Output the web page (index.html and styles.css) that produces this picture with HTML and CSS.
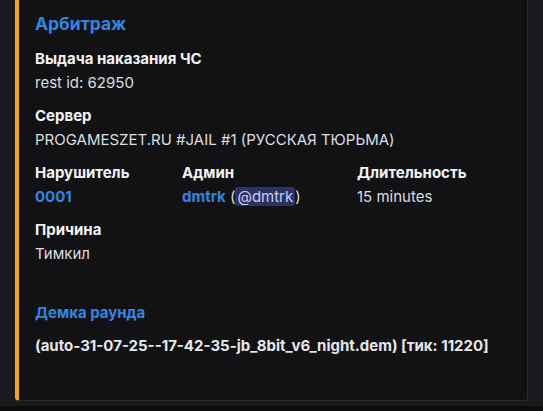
FILE: index.html
```html
<!DOCTYPE html>
<html lang="ru">
<head>
    <meta charset="UTF-8">
    <title>Арбитраж</title>
    <link rel="stylesheet" href="styles.css">
</head>
<body>
<div class="chat">
    <div class="embed">
        <div class="embed-title">Арбитраж</div>
        <div class="embed-fields">
            <div class="field full">
                <div class="field-name">Выдача наказания ЧС</div>
                <div class="field-value">rest id: 62950</div>
            </div>
            <div class="field full">
                <div class="field-name">Сервер</div>
                <div class="field-value">PROGAMESZET.RU #JAIL #1 (РУССКАЯ ТЮРЬМА)</div>
            </div>
            <div class="field">
                <div class="field-name">Нарушитель</div>
                <div class="field-value"><span class="link">0001</span></div>
            </div>
            <div class="field">
                <div class="field-name">Админ</div>
                <div class="field-value"><span class="link">dmtrk</span> (<span class="mention">@dmtrk</span>)</div>
            </div>
            <div class="field">
                <div class="field-name">Длительность</div>
                <div class="field-value">15 minutes</div>
            </div>
            <div class="field full">
                <div class="field-name">Причина</div>
                <div class="field-value">Тимкил</div>
            </div>
        </div>
        <div class="demo">
            <div class="demo-title">Демка раунда</div>
            <div class="demo-value">(auto-31-07-25--17-42-35-jb_8bit_v6_night.dem) [тик: 11220]</div>
        </div>
    </div>
</div>
<div class="bottom-bar"></div>
</body>
</html>
```

FILE: styles.css
```css
body {
    margin: 0;
    padding: 0;
    background: #1a1a1e;
    font-family: Inter, "Noto Sans", sans-serif;
    color: #dbdee1;
    font-size: 15px;
    height: 411px;
    overflow: hidden;
    display: flex;
    flex-direction: column;
}
.chat {
    flex: 1;
    padding: 0 15px 0 15px;
}
.embed {
    margin-top: -10px;
    height: 411px;
    box-sizing: border-box;
    background: #121214;
    border: 1px solid #2a2b30;
    border-left: 4px solid #f5a70d;
    border-radius: 4px;
    padding: 22px 16px 16px 16px;
}
.embed-title {
    color: #2f86e4;
    font-size: 17.5px;
    font-weight: 700;
    line-height: 22px;
    margin-bottom: 13px;
}
.embed-fields {
    display: grid;
    grid-template-columns: 147px 175px 1fr;
    row-gap: 11px;
}
.field.full {
    grid-column: 1 / 4;
}
.field-name {
    color: #f2f3f5;
    font-weight: 700;
    line-height: 22px;
    margin-bottom: 2px;
}
.field-value {
    line-height: 22px;
    color: #dbdee1;
}
.link {
    color: #2f86e4;
    font-weight: 700;
}
.mention {
    background: #2e3260;
    color: #c9cdfb;
    border-radius: 3px;
    padding: 0 2px;
}
.demo {
    margin-top: 37px;
}
.demo-title {
    color: #2f86e4;
    font-weight: 700;
    line-height: 22px;
    margin-bottom: 11px;
}
.demo-value {
    font-weight: 700;
    line-height: 22px;
    color: #e6e7ea;
}
.bottom-bar {
    height: 5px;
    background: #0c0c0d;
}
```
